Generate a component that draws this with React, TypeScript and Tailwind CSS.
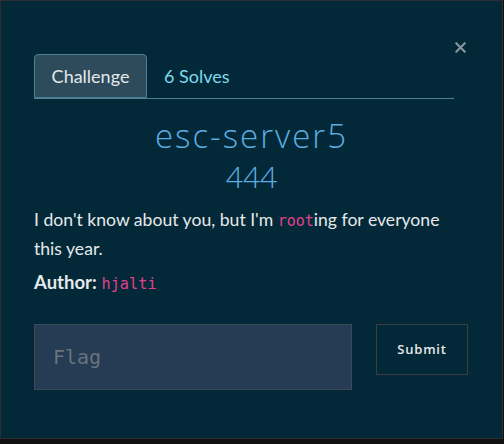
import { X } from "lucide-react";

const App = () => {
  return (
    <div className="w-[504px] h-[444px] bg-[#111111] overflow-hidden">
      {/*-------------modal-------------*/}
      <div className="relative w-[503px] h-[439px] bg-[#032837] border border-[#2b2f31] px-[33px] pt-[53px] font-['Lato','Noto_Sans',sans-serif]">
        <button className="absolute right-[33px] top-[38px] text-[#8797a0]">
          <X size={17} strokeWidth={3} />
        </button>

        {/*-------------tabs-------------*/}
        <div className="flex w-[420px] border-b border-[#4d7f96]">
          <div className="h-[44px] w-[113px] -mb-px flex items-center justify-center bg-[#2e4b5c] border border-[#4d7f96] rounded-t-[4px] text-[18px] text-[#e4e8ea]">
            Challenge
          </div>
          <div className="h-[44px] px-[17px] flex items-center text-[18px] text-[#7fd8ee]">
            6 Solves
          </div>
        </div>

        {/*-------------title-------------*/}
        <div className="mt-[17px] text-center text-[#5cace0] font-['Open_Sans',sans-serif] font-light">
          <h2 className="text-[33px] leading-[40px] tracking-[2px]">esc-server5</h2>
          <h3 className="text-[30px] leading-[40px] mt-[1px]">444</h3>
        </div>

        {/*-------------description-------------*/}
        <p className="mt-[9px] text-[17.6px] leading-[27px] text-[#e6e9eb]">
          I don't know about you, but I'm{" "}
          <code className="font-['DejaVu_Sans_Mono',monospace] text-[15px] text-[#e0418d]">root</code>ing for
          everyone this year.
        </p>
        <p className="mt-[7px] text-[18.5px] leading-[27px] text-[#e6e9eb]">
          <span className="font-bold">Author:</span>{" "}
          <code className="font-['DejaVu_Sans_Mono',monospace] text-[15.3px] text-[#e0418d]">hjalti</code>
        </p>

        {/*-------------flag form-------------*/}
        <div className="mt-[26px] flex items-start">
          <div className="w-[318px] h-[66px] bg-[#263c54] border border-[#3d4a56] flex items-center pl-[18px]">
            <span className="font-['DejaVu_Sans_Mono',monospace] text-[20px] text-[#69737d]">Flag</span>
          </div>
          <button className="ml-[24px] w-[92px] h-[51px] border border-[#3b3d3e] text-[13px] font-semibold tracking-[0.8px] text-[#e6e9eb] font-['Open_Sans',sans-serif]">
            Submit
          </button>
        </div>
      </div>
    </div>
  );
};

export default App;
